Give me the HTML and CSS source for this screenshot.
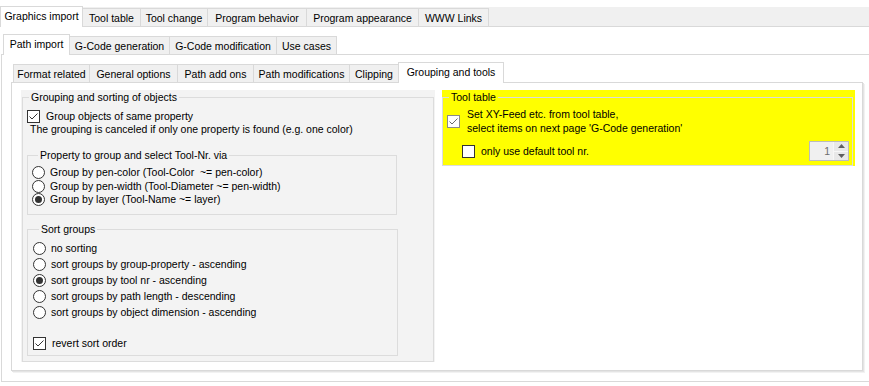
FILE: index.html
```html
<!DOCTYPE html>
<html lang="en">

<head>
    <meta charset="UTF-8">
    <title>Setup - Graphics import</title>
    <link rel="stylesheet" href="styles.css">
</head>

<body>
    <div class="tabs tabs-main">
        <div class="tab active">Graphics import</div>
        <div class="tab">Tool table</div>
        <div class="tab">Tool change</div>
        <div class="tab">Program behavior</div>
        <div class="tab">Program appearance</div>
        <div class="tab">WWW Links</div>
    </div>

    <div class="page page-main">
        <div class="tabs tabs-sub">
            <div class="tab active">Path import</div>
            <div class="tab">G-Code generation</div>
            <div class="tab">G-Code modification</div>
            <div class="tab">Use cases</div>
        </div>

        <div class="page page-sub">
            <div class="tabs tabs-inner">
                <div class="tab">Format related</div>
                <div class="tab">General options</div>
                <div class="tab">Path add ons</div>
                <div class="tab">Path modifications</div>
                <div class="tab">Clipping</div>
                <div class="tab active">Grouping and tools</div>
            </div>

            <div class="page page-inner">
                <!-- left: grouping / sorting -->
                <div class="group group-sort">
                    <fieldset class="box">
                        <legend>Grouping and sorting of objects</legend>
                        <label class="check check-group">
                            <svg class="cb" viewBox="0 0 13 13"><rect x="0.5" y="0.5" width="12" height="12" /><path d="M2.5 6.5l2.5 2.5 5.5-5.5" /></svg>
                            Group objects of same property
                        </label>
                        <p class="note">The grouping is canceled if only one property is found (e.g. one color)</p>

                        <fieldset class="box box-prop">
                            <legend>Property to group and select Tool-Nr. via</legend>
                            <label class="radio">
                                <svg class="rb" viewBox="0 0 13 13"><circle cx="6.5" cy="6.5" r="6" /></svg>
                                Group by pen-color (Tool-Color&nbsp; ~= pen-color)
                            </label>
                            <label class="radio">
                                <svg class="rb" viewBox="0 0 13 13"><circle cx="6.5" cy="6.5" r="6" /></svg>
                                Group by pen-width (Tool-Diameter ~= pen-width)
                            </label>
                            <label class="radio">
                                <svg class="rb on" viewBox="0 0 13 13"><circle cx="6.5" cy="6.5" r="6" /><circle class="dot" cx="6.5" cy="6.5" r="3.5" /></svg>
                                Group by layer (Tool-Name ~= layer)
                            </label>
                        </fieldset>

                        <fieldset class="box box-order">
                            <legend>Sort groups</legend>
                            <label class="radio">
                                <svg class="rb" viewBox="0 0 13 13"><circle cx="6.5" cy="6.5" r="6" /></svg>
                                no sorting
                            </label>
                            <label class="radio">
                                <svg class="rb" viewBox="0 0 13 13"><circle cx="6.5" cy="6.5" r="6" /></svg>
                                sort groups by group-property - ascending
                            </label>
                            <label class="radio">
                                <svg class="rb on" viewBox="0 0 13 13"><circle cx="6.5" cy="6.5" r="6" /><circle class="dot" cx="6.5" cy="6.5" r="3.5" /></svg>
                                sort groups by tool nr - ascending
                            </label>
                            <label class="radio">
                                <svg class="rb" viewBox="0 0 13 13"><circle cx="6.5" cy="6.5" r="6" /></svg>
                                sort groups by path length - descending
                            </label>
                            <label class="radio">
                                <svg class="rb" viewBox="0 0 13 13"><circle cx="6.5" cy="6.5" r="6" /></svg>
                                sort groups by object dimension - ascending
                            </label>
                            <label class="check check-revert">
                                <svg class="cb" viewBox="0 0 13 13"><rect x="0.5" y="0.5" width="12" height="12" /><path d="M2.5 6.5l2.5 2.5 5.5-5.5" /></svg>
                                revert sort order
                            </label>
                        </fieldset>
                    </fieldset>
                </div>

                <!-- right: tool table -->
                <div class="group group-tool">
                    <fieldset class="box">
                        <legend>Tool table</legend>
                        <label class="check check-feed">
                            <svg class="cb cb-dim" viewBox="0 0 13 13"><rect x="0.5" y="0.5" width="12" height="12" /><path d="M2.5 6.5l2.5 2.5 5.5-5.5" /></svg>
                            <span>Set XY-Feed etc. from tool table,<br>select items on next page 'G-Code generation'</span>
                        </label>
                        <div class="tool-row">
                            <label class="check check-default">
                                <svg class="cb" viewBox="0 0 13 13"><rect x="0.5" y="0.5" width="12" height="12" /></svg>
                                only use default tool nr.
                            </label>
                            <div class="num">
                                <span class="num-val">1</span>
                                <span class="num-spin">
                                    <span class="spin"><svg viewBox="0 0 7 4"><path d="M3.5 0L7 4H0z" /></svg></span>
                                    <span class="spin"><svg viewBox="0 0 7 4"><path d="M0 0h7L3.5 4z" /></svg></span>
                                </span>
                            </div>
                        </div>
                    </fieldset>
                </div>
            </div>
        </div>
    </div>
</body>

</html>
```

FILE: styles.css
```css
* {
    box-sizing: border-box;
}

body {
    margin: 0;
    width: 869px;
    height: 386px;
    overflow: hidden;
    background: #fff;
    color: #000;
    font-family: "Liberation Sans", Arial, sans-serif;
    font-size: 10.5px;
    line-height: 13px;
}

/* tab strips */

.tabs {
    display: flex;
    align-items: flex-end;
    height: 27px;
}

.tabs-main {
    height: 26px;
    background: linear-gradient(#fff 7px, #f0f0f0 7px);
}

.tabs-sub {
    padding-left: 3px;
}

.tabs-inner {
    padding-left: 11px;
}

.tab {
    height: 18px;
    margin-right: -1px;
    padding-top: 1px;
    border: 1px solid #d9d9d9;
    border-bottom: none;
    background: #f0f0f0;
    display: flex;
    align-items: center;
    justify-content: center;
    white-space: nowrap;
}

.tab.active {
    height: 21px;
    margin-bottom: -1px;
    padding-top: 0;
    padding-bottom: 1px;
    background: #fff;
    position: relative;
    z-index: 1;
}

.tabs-main .tab:nth-child(1) { width: 83px; }
.tabs-main .tab:nth-child(2) { width: 59px; }
.tabs-main .tab:nth-child(3) { width: 68px; }
.tabs-main .tab:nth-child(4) { width: 100px; }
.tabs-main .tab:nth-child(5) { width: 113px; }
.tabs-main .tab:nth-child(6) { width: 71px; }

.tabs-sub .tab:nth-child(1) { width: 67px; }
.tabs-sub .tab:nth-child(2) { width: 101px; }
.tabs-sub .tab:nth-child(3) { width: 108px; }
.tabs-sub .tab:nth-child(4) { width: 61px; }

.tabs-inner .tab:nth-child(1) { width: 77px; }
.tabs-inner .tab:nth-child(2) { width: 89px; }
.tabs-inner .tab:nth-child(3) { width: 77px; }
.tabs-inner .tab:nth-child(4) { width: 97px; }
.tabs-inner .tab:nth-child(5) { width: 50px; }
.tabs-inner .tab:nth-child(6) { width: 106px; }

/* tab pages */

.page {
    border: 1px solid #d9d9d9;
    background: #fff;
}

.page-main {
    width: 869px;
    height: 360px;
    border-left: none;
    border-right: none;
    border-bottom: none;
}

.page-sub {
    margin-left: 1px;
    width: 868px;
    height: 328px;
    border-right: none;
}

.page-inner {
    margin-left: 9px;
    width: 852px;
    height: 289px;
    padding: 7px 0 0 9px;
    display: flex;
    align-items: flex-start;
    gap: 7px;
    box-shadow: 1px 1px 0 #e4e4e4, 2px 2px 0 #f2f2f2;
}

/* group boxes */

.group {
    padding-top: 1px;
}

.group-sort {
    width: 414px;
    background: #f3f3f3;
}

.group-tool {
    width: 413px;
    background: #ffff00;
}

.box {
    margin: 0;
    padding: 0;
    min-width: 0;
    border: 1px solid #dcdcdc;
}

.box legend {
    margin-left: 6px;
    padding: 0 2px;
    line-height: 13px;
}

.group-sort > .box {
    margin: 0 1px 0 1px;
    padding-bottom: 5px;
}

.group-tool > .box {
    margin-right: 2px;
    padding-bottom: 4px;
}

.box-prop {
    width: 370px;
    margin: 13px 0 0 4px;
    padding: 4px 0 7.5px 4px;
}

.box-order {
    width: 371px;
    margin: 8px 0 0 4px;
    padding: 4px 0 4px 5px;
}

.box-prop legend,
.box-order legend {
    margin-left: 6px;
}

/* check boxes and radio buttons */

.check,
.radio {
    display: flex;
    align-items: center;
}

.cb,
.rb {
    flex: none;
    width: 13px;
    height: 13px;
}

.cb rect {
    fill: #fff;
    stroke: #333;
}

.cb path {
    fill: none;
    stroke: #333;
    stroke-width: 1;
}

.cb-dim rect {
    fill: #fff;
    stroke: #8a8a8a;
}

.cb-dim path {
    stroke: #6a6a6a;
}

.rb circle {
    fill: #fff;
    stroke: #333;
}

.rb .dot {
    fill: #333;
    stroke: none;
}

.check .cb {
    margin-right: 6px;
}

.radio .rb {
    margin-right: 5px;
}

.check-group {
    height: 13px;
    margin: 6px 0 0 4px;
}

.note {
    margin: 0 0 0 7px;
}

.box-prop .radio {
    height: 13.5px;
}

.box-order .radio {
    height: 16px;
}

.check-revert {
    height: 16px;
    margin-top: 15px;
}

.check-feed {
    margin: 3px 0 0 4px;
    line-height: 14px;
}

.check-feed .cb {
    margin-right: 7px;
}

.tool-row {
    margin-top: 6px;
    height: 20px;
    padding: 0 3px 0 19px;
    display: flex;
    align-items: center;
    justify-content: space-between;
}

/* numeric up/down */

.num {
    width: 40px;
    height: 20px;
    border: 1px solid #bcbcbc;
    background: #f0f0f0;
    display: flex;
}

.num-val {
    flex: 1;
    text-align: right;
    padding-right: 3px;
    line-height: 18px;
    color: #6d6d6d;
}

.num-spin {
    width: 15px;
    display: flex;
    flex-direction: column;
}

.spin {
    flex: 1;
    display: flex;
    align-items: center;
    justify-content: center;
    background: #e8e8e8;
    border-left: 1px solid #f7f7f7;
}

.spin + .spin {
    border-top: 1px solid #f7f7f7;
}

.spin svg {
    width: 7px;
    height: 4px;
    fill: #606060;
}
```
